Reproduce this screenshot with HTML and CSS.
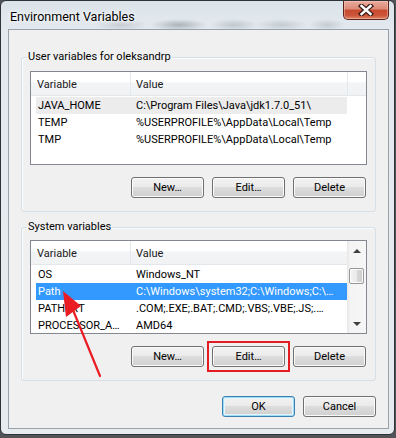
FILE: index.html
```html
<!DOCTYPE html>
<html lang="en">
<head>
    <meta charset="UTF-8">
    <meta name="viewport" content="width=device-width, initial-scale=1.0">
    <title>Environment Variables</title>
    <link rel="stylesheet" href="styles.css">
</head>
<body>
    <div class="window">
        <div class="titlebar">
            <span class="title">Environment Variables</span>
            <button class="close-btn" aria-label="Close">
                <svg width="18" height="12" viewBox="0 0 18 12">
                    <path d="M4.5 2 L13.5 10 M13.5 2 L4.5 10" stroke="#3a1d17" stroke-width="5" stroke-linecap="square" fill="none"/>
                    <path d="M4.5 2 L13.5 10 M13.5 2 L4.5 10" stroke="#ffffff" stroke-width="2.4" stroke-linecap="square" fill="none"/>
                </svg>
            </button>
        </div>

        <div class="client">
            <!-- User variables -->
            <fieldset class="group">
                <legend>User variables for oleksandrp</legend>
                <div class="listview">
                    <div class="lv-main">
                        <div class="lv-header">
                            <span class="hd hd-var">Variable</span>
                            <span class="hd hd-val">Value</span>
                            <span class="hd hd-fill"></span>
                        </div>
                        <div class="lv-rows">
                            <div class="lv-row sel-inactive"><span class="c-var">JAVA_HOME</span><span class="c-val">C:\Program Files\Java\jdk1.7.0_51\</span></div>
                            <div class="lv-row"><span class="c-var">TEMP</span><span class="c-val">%USERPROFILE%\AppData\Local\Temp</span></div>
                            <div class="lv-row"><span class="c-var">TMP</span><span class="c-val">%USERPROFILE%\AppData\Local\Temp</span></div>
                        </div>
                    </div>
                </div>
                <div class="btn-row">
                    <button class="btn">New…</button>
                    <button class="btn">Edit…</button>
                    <button class="btn">Delete</button>
                </div>
            </fieldset>

            <!-- System variables -->
            <fieldset class="group group-system">
                <legend>System variables</legend>
                <div class="listview">
                    <div class="lv-main">
                        <div class="lv-header">
                            <span class="hd hd-var">Variable</span>
                            <span class="hd hd-val hd-last">Value</span>
                        </div>
                        <div class="lv-rows">
                            <div class="lv-row"><span class="c-var">OS</span><span class="c-val">Windows_NT</span></div>
                            <div class="lv-row sel"><span class="c-var">Path</span><span class="c-val">C:\Windows\system32;C:\Windows;C:\…</span></div>
                            <div class="lv-row"><span class="c-var">PATHEXT</span><span class="c-val">.COM;.EXE;.BAT;.CMD;.VBS;.VBE;.JS;.…</span></div>
                            <div class="lv-row"><span class="c-var">PROCESSOR_A…</span><span class="c-val">AMD64</span></div>
                        </div>
                    </div>
                    <div class="scrollbar">
                        <div class="sb-btn sb-up"><span class="arrow-up"></span></div>
                        <div class="sb-track"><div class="sb-thumb"></div></div>
                        <div class="sb-btn sb-down"><span class="arrow-down"></span></div>
                    </div>
                </div>
                <div class="btn-row">
                    <button class="btn">New…</button>
                    <button class="btn btn-marked">Edit…</button>
                    <button class="btn">Delete</button>
                </div>
            </fieldset>

            <div class="dialog-buttons">
                <button class="btn btn-default">OK</button>
                <button class="btn">Cancel</button>
            </div>
        </div>
    </div>

    <!-- red annotation arrow -->
    <svg class="annotation" width="396" height="438" viewBox="0 0 396 438">
        <line x1="100" y1="376" x2="73" y2="310" stroke="#ea1c24" stroke-width="2.2" stroke-linecap="round"/>
        <polygon points="63,291 81,306 66,317" fill="#ea1c24"/>
    </svg>
</body>
</html>
```

FILE: styles.css
```css
* {
    box-sizing: border-box;
}
body {
    margin: 0;
    background: #505357;
    font-family: Roboto, "Liberation Sans", Arial, sans-serif;
    font-size: 11px;
    color: #000;
}
.window {
    width: 395px;
    height: 435px;
    display: flex;
    flex-direction: column;
    border: 1px solid #2e3337;
    border-radius: 6px;
    padding: 0 5px 5px 7px;
    background:
        radial-gradient(ellipse 26px 6px at 120px 24px, rgba(95,105,115,0.22), transparent),
        radial-gradient(ellipse 28px 6px at 178px 24px, rgba(70,80,90,0.35), transparent),
        radial-gradient(ellipse 24px 6px at 233px 24px, rgba(90,100,110,0.25), transparent),
        radial-gradient(ellipse 26px 6px at 280px 24px, rgba(90,100,110,0.22), transparent),
        radial-gradient(ellipse 18px 6px at 326px 24px, rgba(90,100,110,0.22), transparent),
        linear-gradient(#dbe3ea, #e3e9ee 30px, #e6ebef);
}
.titlebar {
    height: 28px;
    display: flex;
    justify-content: space-between;
    align-items: flex-start;
}
.title {
    padding: 8px 0 0 2px;
    font-size: 12.5px;
    line-height: 15px;
    text-shadow: 0 0 6px #fff, 0 0 3px #fff;
}
.close-btn {
    width: 46px;
    height: 19px;
    padding: 0;
    display: flex;
    align-items: center;
    justify-content: center;
    border: 1px solid #5c2419;
    border-top: none;
    border-radius: 0 0 5px 5px;
    background: linear-gradient(#e9ab9d, #dc8a76 45%, #c84a30 50%, #cc553a 80%, #e0876a);
    box-shadow: inset 0 0 0 1px rgba(255,210,200,0.45);
}
.client {
    flex: 1;
    display: flex;
    flex-direction: column;
    background: #f0f0f0;
    border: 1px solid #97a2ab;
    padding: 20px 12px 0 12px;
}
.group {
    margin: 0;
    min-width: 0;
    border: 1px solid #d5dfe5;
    border-radius: 3px;
    padding: 0 8px 13px 8px;
    box-shadow: inset 1px 1px 0 #fafcfd;
}
.group legend {
    margin-left: -3px;
    padding: 0 1px;
    line-height: 14px;
}
.group-system {
    margin-top: 8px;
}
.listview {
    margin-top: 7px;
    height: 94px;
    display: flex;
    border: 1px solid #828790;
    background: #fff;
    overflow: hidden;
}
.group-system .listview {
    margin-top: 6px;
}
.lv-main {
    flex: 1;
    min-width: 0;
}
.lv-header {
    height: 24px;
    display: flex;
    background: linear-gradient(#ffffff, #ffffff 45%, #f3f4f6 46%, #f1f2f4);
    border-bottom: 1px solid #e3e6ea;
}
.hd {
    padding: 2px 0 0 6px;
    line-height: 21px;
    color: #1a1a1a;
    border-right: 1px solid #e3e8ee;
}
.hd-var {
    width: 100px;
}
.hd-val {
    width: 217px;
    padding-left: 5px;
}
.hd-last {
    flex: 1;
    border-right: none;
}
.hd-fill {
    flex: 1;
    border-right: none;
}
.lv-rows {
    padding: 1px 0 0 5px;
}
.lv-row {
    display: flex;
    width: 311px;
    height: 17px;
    line-height: 17px;
    white-space: nowrap;
}
.c-var {
    width: 94px;
    padding-left: 2px;
    overflow: hidden;
}
.c-val {
    flex: 1;
    padding-left: 6px;
    overflow: hidden;
}
.sel-inactive {
    background: #ececec;
}
.sel {
    background: #3399ff;
    color: #fff;
}
.scrollbar {
    width: 19px;
    display: flex;
    flex-direction: column;
    background: linear-gradient(to right, #e6e6e6, #f4f4f4 3px, #f6f6f6);
}
.sb-btn {
    height: 17px;
    display: flex;
    justify-content: center;
    align-items: center;
}
.sb-up {
    padding-top: 3px;
}
.sb-down {
    padding-bottom: 2px;
}
.arrow-up {
    border-left: 4px solid transparent;
    border-right: 4px solid transparent;
    border-bottom: 4px solid #3f3f3f;
}
.arrow-down {
    border-left: 4px solid transparent;
    border-right: 4px solid transparent;
    border-top: 4px solid #3f3f3f;
}
.sb-track {
    flex: 1;
    padding: 10px 0 0 2px;
}
.sb-thumb {
    width: 15px;
    height: 16px;
    border: 1px solid #979797;
    border-radius: 2px;
    background: linear-gradient(to right, #f4f4f4, #e9e9e9 50%, #d8d8d8 51%, #cdcdcd);
    box-shadow: inset 0 0 0 1px #fbfbfb;
}
.btn-row {
    display: flex;
    justify-content: flex-end;
    gap: 8px;
    margin-top: 12px;
    padding-right: 1px;
}
.btn {
    width: 73px;
    height: 21px;
    padding: 0;
    border: 1px solid #707070;
    border-radius: 3px;
    background: linear-gradient(#f2f2f2, #ebebeb 45%, #dddddd 50%, #cfcfcf);
    box-shadow: inset 0 0 0 1px #fbfbfb;
    font: inherit;
    color: #000;
}
.btn-marked {
    position: relative;
}
.btn-marked::after {
    content: "";
    position: absolute;
    top: -6px;
    left: -6px;
    right: -6px;
    bottom: -6px;
    border: 2px solid #e31b23;
}
.btn-default {
    border-color: #3c7fb1;
    box-shadow: inset 0 0 0 1px #9fdcf6, inset 0 0 0 2px #e4f5fc;
}
.dialog-buttons {
    display: flex;
    justify-content: flex-end;
    gap: 8px;
    margin-top: 15px;
}
.annotation {
    position: absolute;
    left: 0;
    top: 0;
    pointer-events: none;
}
```
